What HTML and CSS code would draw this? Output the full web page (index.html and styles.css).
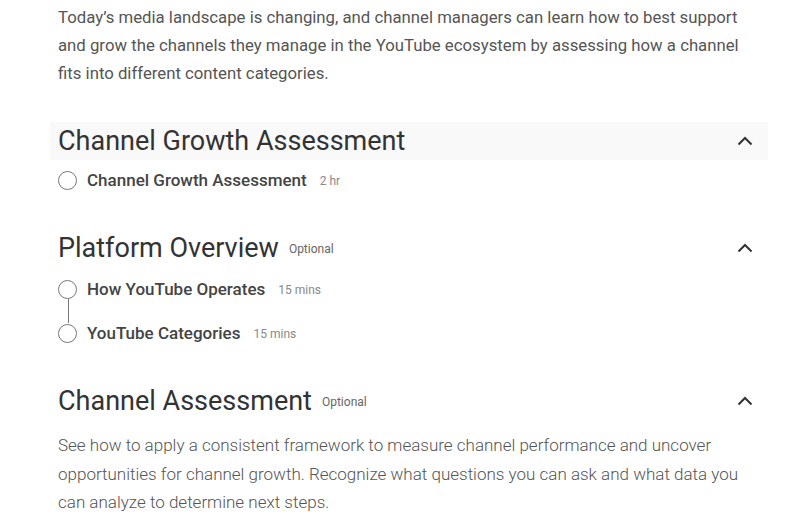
FILE: index.html
```html
<!DOCTYPE html>
<html>
<head>
<meta charset="utf-8">
<link rel="stylesheet" href="styles.css">
</head>
<body>
<main class="main">
  <p class="desc intro">Today’s media landscape is changing, and channel managers can learn how to best support and grow the channels they manage in the YouTube ecosystem by assessing how a channel fits into different content categories.</p>

  <section class="sec sec-first">
    <div class="sec-head hl">
      <h2 class="sec-title">Channel Growth Assessment</h2>
      <svg class="chev" viewBox="0 0 16 10" width="16" height="10"><path d="M1.5 8.5 L8 2 L14.5 8.5" fill="none" stroke="#333" stroke-width="2"/></svg>
    </div>
    <ul class="items">
      <li class="item"><span class="dot"></span><span class="item-title">Channel Growth Assessment</span><span class="dur">2 hr</span></li>
    </ul>
  </section>

  <section class="sec">
    <div class="sec-head">
      <h2 class="sec-title">Platform Overview</h2>
      <span class="tag">Optional</span>
      <svg class="chev" viewBox="0 0 16 10" width="16" height="10"><path d="M1.5 8.5 L8 2 L14.5 8.5" fill="none" stroke="#333" stroke-width="2"/></svg>
    </div>
    <ul class="items linked">
      <li class="item"><span class="dot"></span><span class="item-title">How YouTube Operates</span><span class="dur">15 mins</span></li>
      <li class="item"><span class="dot"></span><span class="item-title">YouTube Categories</span><span class="dur">15 mins</span></li>
    </ul>
  </section>

  <section class="sec sec-last">
    <div class="sec-head">
      <h2 class="sec-title">Channel Assessment</h2>
      <span class="tag">Optional</span>
      <svg class="chev" viewBox="0 0 16 10" width="16" height="10"><path d="M1.5 8.5 L8 2 L14.5 8.5" fill="none" stroke="#333" stroke-width="2"/></svg>
    </div>
    <p class="desc sec-desc">See how to apply a consistent framework to measure channel performance and uncover opportunities for channel growth. Recognize what questions you can ask and what data you can analyze to determine next steps.</p>
  </section>
</main>
</body>
</html>
```

FILE: styles.css
```css
html, body {
  margin: 0;
  padding: 0;
  background: #ffffff;
}
body {
  font-family: Roboto, "Liberation Sans", Arial, sans-serif;
  color: #444;
  overflow: hidden;
}
.main {
  width: 718px;
  margin-left: 50px;
}
.desc {
  font-size: 16.75px;
  line-height: 28px;
  color: #555;
  margin: 0;
  padding: 0 8px;
}
.intro {
  margin-top: 3px;
}
.sec {
  margin-top: 27px;
}
.sec-first {
  margin-top: 35px;
}
.sec-head {
  display: flex;
  align-items: center;
  height: 38px;
  padding: 0 8px;
}
.hl {
  background: #f9f9f9;
}
.sec-title {
  font-size: 27px;
  font-weight: 400;
  color: #333;
  margin: 0;
  line-height: 38px;
}
.tag {
  font-size: 12px;
  color: #666;
  margin-left: 10px;
  padding-top: 2px;
}
.chev {
  margin-left: auto;
  margin-right: 7px;
}
.items {
  list-style: none;
  margin: 0;
  padding: 0 8px;
}
.sec-first .items {
  margin-top: -2px;
}
.item {
  display: flex;
  align-items: center;
  height: 44px;
  position: relative;
}
.dot {
  width: 17px;
  height: 17px;
  border: 1.5px solid #777;
  border-radius: 50%;
  margin-right: 10px;
  background: #fff;
  position: relative;
  z-index: 1;
}
.linked .item + .item::before {
  content: "";
  position: absolute;
  left: 10px;
  top: -12px;
  height: 24px;
  border-left: 1px solid #777;
}
.item-title {
  font-size: 17px;
  font-weight: 500;
  color: #444;
}
.dur {
  font-size: 12px;
  color: #888;
  margin-left: 13px;
  margin-top: 2px;
}
.sec-desc {
  margin-top: 11px;
  font-size: 17px;
  font-weight: 300;
  line-height: 28.5px;
  color: #555;
}
```
